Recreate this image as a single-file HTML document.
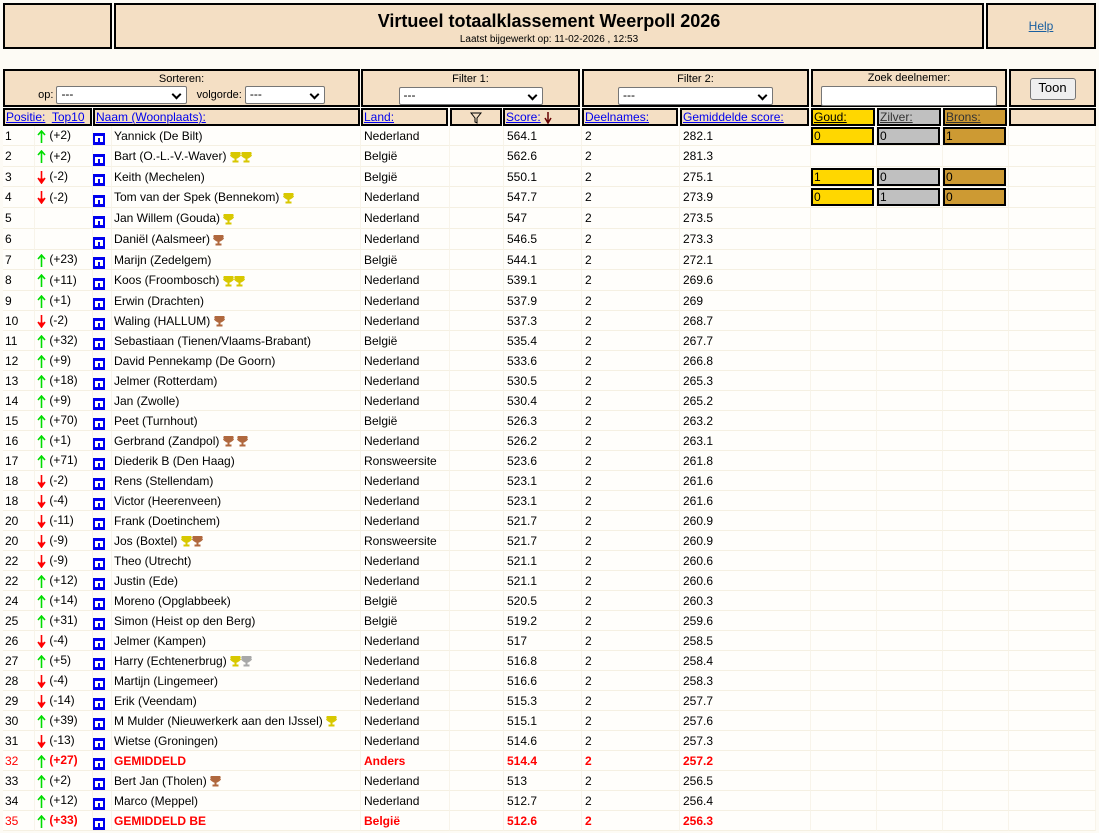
<!DOCTYPE html>
<html><head><meta charset="utf-8">
<style>
body{margin:0;background:#fdfbf5;font-family:"Liberation Sans",Arial,sans-serif;font-size:12px;color:#000;width:1099px;height:833px;overflow:hidden;position:relative}
.b{position:absolute;background:#f4dfc4;border:2px solid #000;box-sizing:border-box}
.c{text-align:center}
a{color:#00e;text-decoration:underline}
.sel{display:inline-block;background:#fff;border:1px solid #767676;border-radius:2px;height:18px;box-sizing:border-box;font-size:12px;line-height:15px;padding-left:4px;text-align:left;position:relative;vertical-align:middle}
.sel:after{content:"";position:absolute;right:6px;top:4px;width:5px;height:5px;border-right:2px solid #000;border-bottom:2px solid #000;transform:rotate(45deg)}
table{position:absolute;left:3px;top:126px;border-collapse:separate;border-spacing:0;table-layout:fixed;width:1093px}
td{padding:0 0 0 3px;height:19px;border-bottom:1px solid #f5f0e2;border-right:1px solid #f8f4ea;background:#fffefb;white-space:nowrap;overflow:hidden;vertical-align:middle;line-height:14px;box-sizing:content-box}
tr.t td{height:20px}
td.p{padding-left:2px}
td.ar{padding-left:2px}
td.f{padding-left:0}
td.n{padding-left:2px}
td.md{padding-left:0}
.m{display:block;height:18px;border:2px solid #000;box-sizing:border-box;margin-right:2px;line-height:14px;padding-left:1px}
.g{background:#ffd700}.s{background:#c0c0c0}.br{background:#cd9a33}
tr.r td{color:#f00}
tr.r td.n,tr.r td.l,tr.r td.sc,tr.r td.d,tr.r td.ge,tr.r td.ch{font-weight:bold}
svg{vertical-align:middle}
.fl{position:relative;top:3px}
</style></head><body>
<svg width="0" height="0" style="position:absolute">
<symbol id="fl" viewBox="0 0 12 12"><rect width="12" height="12" fill="#0000ee"/><rect x="2" y="3" width="8" height="6" fill="#fff"/><rect x="5" y="5" width="2" height="4" fill="#0000ee"/></symbol>
<symbol id="up" viewBox="0 0 9 13"><path d="M4.5 1V13M1 5L4.5 1L8 5" stroke="#00dd00" stroke-width="1.6" fill="none"/></symbol>
<symbol id="dn" viewBox="0 0 9 13"><path d="M4.5 0V11M1 7L4.5 12L8 7" stroke="#ff0000" stroke-width="1.6" fill="none"/><path d="M1.5 7.5L4.5 12L7.5 7.5Z" fill="#f00"/></symbol>
<symbol id="cup" viewBox="0 0 11 12"><path d="M1 1H10V4Q10 7 5.5 8Q1 7 1 4Z" fill="currentColor"/><rect x="4.5" y="7" width="2" height="2.5" fill="currentColor"/><rect x="2.5" y="9.5" width="6" height="2" fill="currentColor"/><path d="M1 2H0V4L2 6M10 2H11V4L9 6" stroke="currentColor" fill="none" stroke-width="0.8"/></symbol>
</svg>

<div class="b" style="left:3px;top:3px;width:109px;height:46px"></div>
<div class="b c" style="left:114px;top:3px;width:870px;height:46px"><div style="font-size:18px;font-weight:bold;margin-top:6px">Virtueel totaalklassement Weerpoll 2026</div><div style="font-size:10px;margin-top:2px">Laatst bijgewerkt op: 11-02-2026 , 12:53</div></div>
<div class="b c" style="left:986px;top:3px;width:110px;height:46px;line-height:42px"><a style="color:#1a5fa0">Help</a></div>

<div class="b c" style="left:3px;top:69px;width:357px;height:38px;font-size:11px;line-height:13px;padding-top:2px">Sorteren:<br>op: <span class="sel" style="width:131px">---</span> &nbsp; volgorde: <span class="sel" style="width:80px">---</span></div>
<div class="b c" style="left:361px;top:69px;width:219px;height:38px;font-size:11px;line-height:13px;padding-top:2px">Filter 1:<br><span class="sel" style="width:144px;margin-top:1px">---</span></div>
<div class="b c" style="left:582px;top:69px;width:227px;height:38px;font-size:11px;line-height:13px;padding-top:2px">Filter 2:<br><span class="sel" style="width:155px;margin-top:1px">---</span></div>
<div class="b c" style="left:811px;top:69px;width:196px;height:38px;font-size:11px;line-height:13px;padding-top:1px">Zoek deelnemer:<br><span style="display:inline-block;width:176px;height:20px;background:#fff;border:1px solid #767676;border-radius:2px;box-sizing:border-box;margin-top:1px"></span></div>
<div class="b c" style="left:1009px;top:69px;width:87px;height:38px"><span style="display:inline-block;margin-top:7px;width:44px;height:20px;border:1px solid #767676;border-radius:3px;background:#efefef;font-size:13px;line-height:18px">Toon</span></div>

<div class="b" style="left:3px;top:108px;width:89px;height:18px;line-height:14px;padding-left:1px"><a>Positie:</a>&nbsp; <a>Top10</a></div>
<div class="b" style="left:93px;top:108px;width:267px;height:18px;line-height:14px;padding-left:1px"><a>Naam (Woonplaats):</a></div>
<div class="b" style="left:361px;top:108px;width:87px;height:18px;line-height:14px;padding-left:1px"><a>Land:</a></div>
<div class="b c" style="left:450px;top:108px;width:52px;height:18px"><svg width="12" height="12" viewBox="0 0 12 12" style="margin-top:1px"><path d="M1 1H11L7 6V11L5 10V6Z" fill="none" stroke="#000"/></svg></div>
<div class="b" style="left:503px;top:108px;width:77px;height:18px;line-height:14px;padding-left:1px"><a>Score:</a> <svg width="8" height="12"><path d="M4 0V10M1 6L4 11L7 6" stroke="#600" stroke-width="1.5" fill="none"/></svg></div>
<div class="b" style="left:582px;top:108px;width:96px;height:18px;line-height:14px;padding-left:1px"><a>Deelnames:</a></div>
<div class="b" style="left:680px;top:108px;width:129px;height:18px;line-height:14px;padding-left:1px"><a>Gemiddelde score:</a></div>
<div class="b g" style="left:811px;top:108px;width:64px;height:18px;line-height:14px;padding-left:1px"><a style="color:#000">Goud:</a></div>
<div class="b s" style="left:877px;top:108px;width:64px;height:18px;line-height:14px;padding-left:1px"><a style="color:#333">Zilver:</a></div>
<div class="b br" style="left:943px;top:108px;width:64px;height:18px;line-height:14px;padding-left:1px"><a style="color:#333">Brons:</a></div>
<div class="b" style="left:1009px;top:108px;width:87px;height:18px"></div>

<table>
<colgroup><col style="width:32px"><col style="width:58px"><col style="width:19px"><col style="width:249px"><col style="width:89px"><col style="width:54px"><col style="width:78px"><col style="width:98px"><col style="width:131px"><col style="width:66px"><col style="width:66px"><col style="width:66px"><col style="width:87px"></colgroup>
<tr><td class="p">1</td><td class="ar ch"><svg width="9" height="13"><use href="#up"/></svg> (+2)</td><td class="f"><svg class="fl" width="12" height="12"><use href="#fl"/></svg></td><td class="n">Yannick (De Bilt)</td><td class="l">Nederland</td><td></td><td class="sc">564.1</td><td class="d">2</td><td class="ge">282.1</td><td class="md"><span class="m g">0</span></td><td class="md"><span class="m s">0</span></td><td class="md"><span class="m br">1</span></td><td></td></tr>
<tr class="t"><td class="p">2</td><td class="ar ch"><svg width="9" height="13"><use href="#up"/></svg> (+2)</td><td class="f"><svg class="fl" width="12" height="12"><use href="#fl"/></svg></td><td class="n">Bart (O.-L.-V.-Waver) <svg width="11" height="12" style="color:#d8c800"><use href="#cup"/></svg><svg width="11" height="12" style="color:#d8c800"><use href="#cup"/></svg></td><td class="l">België</td><td></td><td class="sc">562.6</td><td class="d">2</td><td class="ge">281.3</td><td></td><td></td><td></td><td></td></tr>
<tr><td class="p">3</td><td class="ar ch"><svg width="9" height="13"><use href="#dn"/></svg> (-2)</td><td class="f"><svg class="fl" width="12" height="12"><use href="#fl"/></svg></td><td class="n">Keith (Mechelen)</td><td class="l">België</td><td></td><td class="sc">550.1</td><td class="d">2</td><td class="ge">275.1</td><td class="md"><span class="m g">1</span></td><td class="md"><span class="m s">0</span></td><td class="md"><span class="m br">0</span></td><td></td></tr>
<tr class="t"><td class="p">4</td><td class="ar ch"><svg width="9" height="13"><use href="#dn"/></svg> (-2)</td><td class="f"><svg class="fl" width="12" height="12"><use href="#fl"/></svg></td><td class="n">Tom van der Spek (Bennekom) <svg width="11" height="12" style="color:#d8c800"><use href="#cup"/></svg></td><td class="l">Nederland</td><td></td><td class="sc">547.7</td><td class="d">2</td><td class="ge">273.9</td><td class="md"><span class="m g">0</span></td><td class="md"><span class="m s">1</span></td><td class="md"><span class="m br">0</span></td><td></td></tr>
<tr class="t"><td class="p">5</td><td class="ar ch"></td><td class="f"><svg class="fl" width="12" height="12"><use href="#fl"/></svg></td><td class="n">Jan Willem (Gouda) <svg width="11" height="12" style="color:#d8c800"><use href="#cup"/></svg></td><td class="l">Nederland</td><td></td><td class="sc">547</td><td class="d">2</td><td class="ge">273.5</td><td></td><td></td><td></td><td></td></tr>
<tr class="t"><td class="p">6</td><td class="ar ch"></td><td class="f"><svg class="fl" width="12" height="12"><use href="#fl"/></svg></td><td class="n">Daniël (Aalsmeer) <svg width="11" height="12" style="color:#b0683e"><use href="#cup"/></svg></td><td class="l">Nederland</td><td></td><td class="sc">546.5</td><td class="d">2</td><td class="ge">273.3</td><td></td><td></td><td></td><td></td></tr>
<tr><td class="p">7</td><td class="ar ch"><svg width="9" height="13"><use href="#up"/></svg> (+23)</td><td class="f"><svg class="fl" width="12" height="12"><use href="#fl"/></svg></td><td class="n">Marijn (Zedelgem)</td><td class="l">België</td><td></td><td class="sc">544.1</td><td class="d">2</td><td class="ge">272.1</td><td></td><td></td><td></td><td></td></tr>
<tr class="t"><td class="p">8</td><td class="ar ch"><svg width="9" height="13"><use href="#up"/></svg> (+11)</td><td class="f"><svg class="fl" width="12" height="12"><use href="#fl"/></svg></td><td class="n">Koos (Froombosch) <svg width="11" height="12" style="color:#d8c800"><use href="#cup"/></svg><svg width="11" height="12" style="color:#d8c800"><use href="#cup"/></svg></td><td class="l">Nederland</td><td></td><td class="sc">539.1</td><td class="d">2</td><td class="ge">269.6</td><td></td><td></td><td></td><td></td></tr>
<tr><td class="p">9</td><td class="ar ch"><svg width="9" height="13"><use href="#up"/></svg> (+1)</td><td class="f"><svg class="fl" width="12" height="12"><use href="#fl"/></svg></td><td class="n">Erwin (Drachten)</td><td class="l">Nederland</td><td></td><td class="sc">537.9</td><td class="d">2</td><td class="ge">269</td><td></td><td></td><td></td><td></td></tr>
<tr><td class="p">10</td><td class="ar ch"><svg width="9" height="13"><use href="#dn"/></svg> (-2)</td><td class="f"><svg class="fl" width="12" height="12"><use href="#fl"/></svg></td><td class="n">Waling (HALLUM) <svg width="11" height="12" style="color:#b0683e"><use href="#cup"/></svg></td><td class="l">Nederland</td><td></td><td class="sc">537.3</td><td class="d">2</td><td class="ge">268.7</td><td></td><td></td><td></td><td></td></tr>
<tr><td class="p">11</td><td class="ar ch"><svg width="9" height="13"><use href="#up"/></svg> (+32)</td><td class="f"><svg class="fl" width="12" height="12"><use href="#fl"/></svg></td><td class="n">Sebastiaan (Tienen/Vlaams-Brabant)</td><td class="l">België</td><td></td><td class="sc">535.4</td><td class="d">2</td><td class="ge">267.7</td><td></td><td></td><td></td><td></td></tr>
<tr><td class="p">12</td><td class="ar ch"><svg width="9" height="13"><use href="#up"/></svg> (+9)</td><td class="f"><svg class="fl" width="12" height="12"><use href="#fl"/></svg></td><td class="n">David Pennekamp (De Goorn)</td><td class="l">Nederland</td><td></td><td class="sc">533.6</td><td class="d">2</td><td class="ge">266.8</td><td></td><td></td><td></td><td></td></tr>
<tr><td class="p">13</td><td class="ar ch"><svg width="9" height="13"><use href="#up"/></svg> (+18)</td><td class="f"><svg class="fl" width="12" height="12"><use href="#fl"/></svg></td><td class="n">Jelmer (Rotterdam)</td><td class="l">Nederland</td><td></td><td class="sc">530.5</td><td class="d">2</td><td class="ge">265.3</td><td></td><td></td><td></td><td></td></tr>
<tr><td class="p">14</td><td class="ar ch"><svg width="9" height="13"><use href="#up"/></svg> (+9)</td><td class="f"><svg class="fl" width="12" height="12"><use href="#fl"/></svg></td><td class="n">Jan (Zwolle)</td><td class="l">Nederland</td><td></td><td class="sc">530.4</td><td class="d">2</td><td class="ge">265.2</td><td></td><td></td><td></td><td></td></tr>
<tr><td class="p">15</td><td class="ar ch"><svg width="9" height="13"><use href="#up"/></svg> (+70)</td><td class="f"><svg class="fl" width="12" height="12"><use href="#fl"/></svg></td><td class="n">Peet (Turnhout)</td><td class="l">België</td><td></td><td class="sc">526.3</td><td class="d">2</td><td class="ge">263.2</td><td></td><td></td><td></td><td></td></tr>
<tr><td class="p">16</td><td class="ar ch"><svg width="9" height="13"><use href="#up"/></svg> (+1)</td><td class="f"><svg class="fl" width="12" height="12"><use href="#fl"/></svg></td><td class="n">Gerbrand (Zandpol) <svg width="11" height="12" style="color:#b0683e"><use href="#cup"/></svg> <svg width="11" height="12" style="color:#b0683e"><use href="#cup"/></svg></td><td class="l">Nederland</td><td></td><td class="sc">526.2</td><td class="d">2</td><td class="ge">263.1</td><td></td><td></td><td></td><td></td></tr>
<tr><td class="p">17</td><td class="ar ch"><svg width="9" height="13"><use href="#up"/></svg> (+71)</td><td class="f"><svg class="fl" width="12" height="12"><use href="#fl"/></svg></td><td class="n">Diederik B (Den Haag)</td><td class="l">Ronsweersite</td><td></td><td class="sc">523.6</td><td class="d">2</td><td class="ge">261.8</td><td></td><td></td><td></td><td></td></tr>
<tr><td class="p">18</td><td class="ar ch"><svg width="9" height="13"><use href="#dn"/></svg> (-2)</td><td class="f"><svg class="fl" width="12" height="12"><use href="#fl"/></svg></td><td class="n">Rens (Stellendam)</td><td class="l">Nederland</td><td></td><td class="sc">523.1</td><td class="d">2</td><td class="ge">261.6</td><td></td><td></td><td></td><td></td></tr>
<tr><td class="p">18</td><td class="ar ch"><svg width="9" height="13"><use href="#dn"/></svg> (-4)</td><td class="f"><svg class="fl" width="12" height="12"><use href="#fl"/></svg></td><td class="n">Victor (Heerenveen)</td><td class="l">Nederland</td><td></td><td class="sc">523.1</td><td class="d">2</td><td class="ge">261.6</td><td></td><td></td><td></td><td></td></tr>
<tr><td class="p">20</td><td class="ar ch"><svg width="9" height="13"><use href="#dn"/></svg> (-11)</td><td class="f"><svg class="fl" width="12" height="12"><use href="#fl"/></svg></td><td class="n">Frank (Doetinchem)</td><td class="l">Nederland</td><td></td><td class="sc">521.7</td><td class="d">2</td><td class="ge">260.9</td><td></td><td></td><td></td><td></td></tr>
<tr><td class="p">20</td><td class="ar ch"><svg width="9" height="13"><use href="#dn"/></svg> (-9)</td><td class="f"><svg class="fl" width="12" height="12"><use href="#fl"/></svg></td><td class="n">Jos (Boxtel) <svg width="11" height="12" style="color:#d8c800"><use href="#cup"/></svg><svg width="11" height="12" style="color:#b0683e"><use href="#cup"/></svg></td><td class="l">Ronsweersite</td><td></td><td class="sc">521.7</td><td class="d">2</td><td class="ge">260.9</td><td></td><td></td><td></td><td></td></tr>
<tr><td class="p">22</td><td class="ar ch"><svg width="9" height="13"><use href="#dn"/></svg> (-9)</td><td class="f"><svg class="fl" width="12" height="12"><use href="#fl"/></svg></td><td class="n">Theo (Utrecht)</td><td class="l">Nederland</td><td></td><td class="sc">521.1</td><td class="d">2</td><td class="ge">260.6</td><td></td><td></td><td></td><td></td></tr>
<tr><td class="p">22</td><td class="ar ch"><svg width="9" height="13"><use href="#up"/></svg> (+12)</td><td class="f"><svg class="fl" width="12" height="12"><use href="#fl"/></svg></td><td class="n">Justin (Ede)</td><td class="l">Nederland</td><td></td><td class="sc">521.1</td><td class="d">2</td><td class="ge">260.6</td><td></td><td></td><td></td><td></td></tr>
<tr><td class="p">24</td><td class="ar ch"><svg width="9" height="13"><use href="#up"/></svg> (+14)</td><td class="f"><svg class="fl" width="12" height="12"><use href="#fl"/></svg></td><td class="n">Moreno (Opglabbeek)</td><td class="l">België</td><td></td><td class="sc">520.5</td><td class="d">2</td><td class="ge">260.3</td><td></td><td></td><td></td><td></td></tr>
<tr><td class="p">25</td><td class="ar ch"><svg width="9" height="13"><use href="#up"/></svg> (+31)</td><td class="f"><svg class="fl" width="12" height="12"><use href="#fl"/></svg></td><td class="n">Simon (Heist op den Berg)</td><td class="l">België</td><td></td><td class="sc">519.2</td><td class="d">2</td><td class="ge">259.6</td><td></td><td></td><td></td><td></td></tr>
<tr><td class="p">26</td><td class="ar ch"><svg width="9" height="13"><use href="#dn"/></svg> (-4)</td><td class="f"><svg class="fl" width="12" height="12"><use href="#fl"/></svg></td><td class="n">Jelmer (Kampen)</td><td class="l">Nederland</td><td></td><td class="sc">517</td><td class="d">2</td><td class="ge">258.5</td><td></td><td></td><td></td><td></td></tr>
<tr><td class="p">27</td><td class="ar ch"><svg width="9" height="13"><use href="#up"/></svg> (+5)</td><td class="f"><svg class="fl" width="12" height="12"><use href="#fl"/></svg></td><td class="n">Harry (Echtenerbrug) <svg width="11" height="12" style="color:#d8c800"><use href="#cup"/></svg><svg width="11" height="12" style="color:#a8a8a8"><use href="#cup"/></svg></td><td class="l">Nederland</td><td></td><td class="sc">516.8</td><td class="d">2</td><td class="ge">258.4</td><td></td><td></td><td></td><td></td></tr>
<tr><td class="p">28</td><td class="ar ch"><svg width="9" height="13"><use href="#dn"/></svg> (-4)</td><td class="f"><svg class="fl" width="12" height="12"><use href="#fl"/></svg></td><td class="n">Martijn (Lingemeer)</td><td class="l">Nederland</td><td></td><td class="sc">516.6</td><td class="d">2</td><td class="ge">258.3</td><td></td><td></td><td></td><td></td></tr>
<tr><td class="p">29</td><td class="ar ch"><svg width="9" height="13"><use href="#dn"/></svg> (-14)</td><td class="f"><svg class="fl" width="12" height="12"><use href="#fl"/></svg></td><td class="n">Erik (Veendam)</td><td class="l">Nederland</td><td></td><td class="sc">515.3</td><td class="d">2</td><td class="ge">257.7</td><td></td><td></td><td></td><td></td></tr>
<tr><td class="p">30</td><td class="ar ch"><svg width="9" height="13"><use href="#up"/></svg> (+39)</td><td class="f"><svg class="fl" width="12" height="12"><use href="#fl"/></svg></td><td class="n">M Mulder (Nieuwerkerk aan den IJssel) <svg width="11" height="12" style="color:#d8c800"><use href="#cup"/></svg></td><td class="l">Nederland</td><td></td><td class="sc">515.1</td><td class="d">2</td><td class="ge">257.6</td><td></td><td></td><td></td><td></td></tr>
<tr><td class="p">31</td><td class="ar ch"><svg width="9" height="13"><use href="#dn"/></svg> (-13)</td><td class="f"><svg class="fl" width="12" height="12"><use href="#fl"/></svg></td><td class="n">Wietse (Groningen)</td><td class="l">Nederland</td><td></td><td class="sc">514.6</td><td class="d">2</td><td class="ge">257.3</td><td></td><td></td><td></td><td></td></tr>
<tr class="r"><td class="p">32</td><td class="ar ch"><svg width="9" height="13"><use href="#up"/></svg> (+27)</td><td class="f"><svg class="fl" width="12" height="12"><use href="#fl"/></svg></td><td class="n">GEMIDDELD</td><td class="l">Anders</td><td></td><td class="sc">514.4</td><td class="d">2</td><td class="ge">257.2</td><td></td><td></td><td></td><td></td></tr>
<tr><td class="p">33</td><td class="ar ch"><svg width="9" height="13"><use href="#up"/></svg> (+2)</td><td class="f"><svg class="fl" width="12" height="12"><use href="#fl"/></svg></td><td class="n">Bert Jan (Tholen) <svg width="11" height="12" style="color:#b0683e"><use href="#cup"/></svg></td><td class="l">Nederland</td><td></td><td class="sc">513</td><td class="d">2</td><td class="ge">256.5</td><td></td><td></td><td></td><td></td></tr>
<tr><td class="p">34</td><td class="ar ch"><svg width="9" height="13"><use href="#up"/></svg> (+12)</td><td class="f"><svg class="fl" width="12" height="12"><use href="#fl"/></svg></td><td class="n">Marco (Meppel)</td><td class="l">Nederland</td><td></td><td class="sc">512.7</td><td class="d">2</td><td class="ge">256.4</td><td></td><td></td><td></td><td></td></tr>
<tr class="r"><td class="p">35</td><td class="ar ch"><svg width="9" height="13"><use href="#up"/></svg> (+33)</td><td class="f"><svg class="fl" width="12" height="12"><use href="#fl"/></svg></td><td class="n">GEMIDDELD BE</td><td class="l">België</td><td></td><td class="sc">512.6</td><td class="d">2</td><td class="ge">256.3</td><td></td><td></td><td></td><td></td></tr>
</table>
</body></html>
